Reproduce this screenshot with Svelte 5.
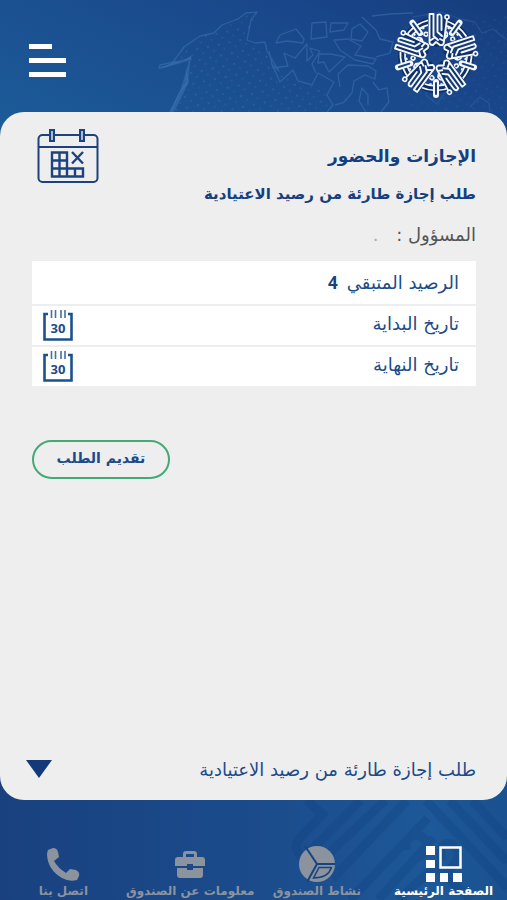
<script>
  const turns = [0, 72, 144, 216, 288];
  const dates = [
    { id: 'start', label: 'تاريخ البداية' },
    { id: 'end', label: 'تاريخ النهاية' }
  ];
  let open = $state(false);
</script>

<div class="app" dir="rtl" lang="ar">
  <header>
    <svg class="map" viewBox="0 0 357 112" aria-hidden="true">
      <defs>
        <pattern id="dots" width="11" height="11" patternUnits="userSpaceOnUse" patternTransform="rotate(-12)">
          <circle cx="3" cy="3" r="1" fill="#4a80bb" opacity=".45" />
          <circle cx="8" cy="8" r="1" fill="#4a80bb" opacity=".3" />
        </pattern>
      </defs>
      <path d="M22 112L41 63L27 61Q40 40 65 31L88 18L107 12L98 40L117 51L129 75L180 90V112Z" fill="url(#dots)" opacity=".8" />
      <path d="M250 20L357 14V112H260Z" fill="url(#dots)" opacity=".4" />
      <g fill="none" stroke="#4177b5" stroke-width="1.3" opacity=".5" stroke-linejoin="round">
        <path d="M21 111L30 92L38 82L36 72L41 58L27 62L17 66L9 68L10 65L23 62L34 47L50 36L64 33L72 25L88 19L96 13L107 12L101 20L97 40L105 43L115 42L117 51L129 71L122 64L127 75L130 82L143 70L148 81L162 85L168 73L184 82L177 95L183 105L177 112" />
        <path d="M126 43L130 35L146 29L154 39L153 43L137 41ZM119 51L123 68L138 66L134 53L145 58L157 44L157 61L163 55L160 48L170 51L162 64L166 73M162 23L176 22L177 37L161 39ZM181 23L198 23L194 30L180 32ZM202 29L210 24L218 32L212 41L201 39ZM184 40L198 39L211 46L205 55L226 59L223 64L205 60L190 50ZM222 16L240 14L263 13M212 17L226 30L230 39L243 42L240 53L226 57M181 54L195 57L179 72L174 62L168 63L169 54ZM190 87L188 74L198 65L218 66L226 71L225 79L215 75L204 81L202 93L193 103L185 105M216 112L209 101L212 88L218 95L218 105M223 82L229 90L237 88L239 102L231 112" />
        <path d="M263 17L292 12L310 19L325 22L332 33L343 29L357 40M260 82L274 77L277 96L287 104L296 91M320 107L330 97L339 103L340 112" opacity=".6" />
      </g>
      <path d="M24 112L38 84L40 63L35 75L30 91L19 112ZM9 69L25 61L33 61L42 55L40 60L28 64Z" fill="#3c73b2" opacity=".55" />
    </svg>

    <svg class="emblem" viewBox="-44 -44 88 88" role="img" aria-label="الشعار">
      <g fill="none" stroke-linecap="round" stroke-linejoin="round">
        {#each turns as turn}
          <g transform="rotate({turn + 36})">
            <path d="M-16-30Q0-39 16-30" stroke="#102f65" stroke-width="7" />
            <path d="M-16-32Q0-39 16-32M-14-28Q0-34 14-28" stroke="#f5f8fc" stroke-width="1.700" />
            <path d="M0-40V-27" stroke="#f5f8fc" stroke-width="6" />
            <path d="M0-39V-28" stroke="#17417d" stroke-width="2" />
            <path d="M-2-22Q-5-27-7-23Q-6-19-2-22Q-2-17-7-16M7-22Q4-27 2-23Q3-19 7-22Q7-17 3-16M-10-26V-22M10-26V-22M-5-29H-6M6-29H5" stroke="#f5f8fc" stroke-width="1.700" />
          </g>
        {/each}
        {#each turns as turn}
          <g transform="rotate({turn})">
            <path d="M-6-40V-14L0-10L6-12L10-37" stroke="#102f65" stroke-width="4" fill="#153b77" />
            <path d="M-6.500-41V-14M-2.500-41V-19L2-15M1.500-40V-23L6-19M5.500-38V-25M11-36L8-14M-6.500-14L-2-17M-6.500-14Q-7-10-3-10L0-13L4-10Q8-9 8-14L4-16M-6.500-41H-2.500M1.500-40Q5-42 5.500-38" stroke="#f5f8fc" stroke-width="1.900" />
            <circle cx="11" cy="-38" r="2" stroke="#f5f8fc" stroke-width="1.600" fill="#17417d" />
          </g>
        {/each}
      </g>
    </svg>

    <button class="menu" aria-label="القائمة"><span></span><span></span><span></span></button>
  </header>

  <main>
    <div class="heading">
      <div>
        <h1>الإجازات والحضور</h1>
        <h2>طلب إجازة طارئة من رصيد الاعتيادية</h2>
      </div>
      <svg class="calendar" viewBox="0 0 62 56" fill="none" stroke="#1c437f" stroke-width="2" aria-hidden="true">
        <rect x="1.5" y="7" width="59" height="47" rx="4" />
        <path d="M2 19H60" />
        <g fill="#a9bbd2"><rect x="13" y="2" width="4" height="11" /><rect x="43" y="2" width="4" height="11" /></g>
        <path d="M15 24.500H30V48.500H15ZM22.500 24.500V48.500M15 32.500H30M15 40.500H46V48.500H30M38 40.500V48.500M35 24L46 35.500M46 24L35 35.500" stroke-width="2.400" />
      </svg>
    </div>

    <p class="manager">المسؤول : <span>.</span></p>

    <form id="request" onsubmit={(event) => event.preventDefault()}>
      <div class="row balance"><span>الرصيد المتبقي</span><strong>4</strong></div>
      {#each dates as date}
        <div class="row">
          <label for={date.id}>{date.label}</label>
          <button type="button" id={date.id} class="pick">
            <svg viewBox="0 0 30 32" fill="none" stroke="#1d508f" aria-hidden="true">
              <path d="M5 4H1.500V29.500H28.500V4H25" stroke-width="2.600" />
              <path d="M8.500 0V8M12.500 0V8M18 0V8M22 0V8" stroke="#47719f" stroke-width="1.600" />
            </svg>
            <span>30</span>
          </button>
        </div>
      {/each}
      <button class="submit">تقديم الطلب</button>
    </form>

    <button class="expand" aria-expanded={open} onclick={() => (open = !open)}>
      <span>طلب إجازة طارئة من رصيد الاعتيادية</span>
      <svg viewBox="0 0 26 18" aria-hidden="true"><path d="M0 0H26L13 18Z" fill="#14397a" /></svg>
    </button>
  </main>

  <nav>
    <svg class="motif" viewBox="0 0 240 100" fill="none" stroke="#0d3e7d" stroke-width="9" opacity=".25" aria-hidden="true">
      <path d="M38 0L54 14L30 39Q23 50 35 58L92 0M48 65L117 0M64 79L139 0M82 100L160 18M110 100L166 38M158 0L192 36L240 88M182 0L240 62M205 0L240 38M138 50Q137 32 152 36Q166 43 153 56L142 62M174 60Q170 40 184 44Q199 54 180 72M130 100L168 66L203 100" />
    </svg>
    <a href="#home" class="active" aria-current="page">
      <svg viewBox="0 0 36 36" aria-hidden="true"><path d="M0 0H9V9H0ZM0 14H9V22H0ZM0 27H9V36H0ZM14 27H22V36H14ZM27 27H36V36H27Z" fill="currentColor" /><path d="M14.500 1.500H34.500V21.500H14.500Z" fill="none" stroke="currentColor" stroke-width="2.500" /></svg>
      <span>الصفحة الرئيسية</span>
    </a>
    <a href="#activity">
      <svg viewBox="0 0 36 36" aria-hidden="true"><circle cx="18" cy="18" r="18" fill="currentColor" /><path d="M6 0L18 18H36M18 18L8 36" fill="none" stroke="#17437f" stroke-width="2" /><path d="M20 21.500H32.500Q29 32 14.500 32Z" fill="none" stroke="#17437f" stroke-width="1.500" /></svg>
      <span>نشاط الصندوق</span>
    </a>
    <a href="#about">
      <svg viewBox="0 0 36 36" aria-hidden="true"><path d="M11 11V8Q11 5 14 5H22Q25 5 25 8V11H30Q33 11 33 14V20H21V18H15V20H3V14Q3 11 6 11ZM14 11H22V8H14ZM5 22H15V24H21V22H31V29Q31 32 28 32H8Q5 32 5 29Z" fill="currentColor" fill-rule="evenodd" /></svg>
      <span>معلومات عن الصندوق</span>
    </a>
    <a href="#contact">
      <svg viewBox="0 0 36 36" aria-hidden="true"><path d="M3 4L8 2Q12 2 13 6L14 11L9 15Q13 22 21 27L25 23L31 24Q35 26 34 30L32 34Q24 36 17 32Q3 24 2 9Q2 6 3 4Z" fill="currentColor" /></svg>
      <span>اتصل بنا</span>
    </a>
  </nav>
</div>

<style>
  :global(body) { margin: 0; }
  * { box-sizing: border-box; }
  .app {
    min-height: 100vh;
    display: flex;
    flex-direction: column;
    font-family: "DejaVu Sans", "Noto Sans", sans-serif;
    color: #1c4b89;
    background: linear-gradient(90deg, #194180 0%, #1b4b8b 50%, #1d5898 85%, #1a5190 100%);
  }
  button { font: inherit; color: inherit; border: 0; padding: 0; background: none; cursor: pointer; }
  header {
    position: relative;
    height: 132px;
    margin-bottom: -20px;
    padding: 11px 27px 36px 29px;
    display: flex;
    justify-content: space-between;
    align-items: flex-start;
    background: linear-gradient(25deg, #1c5b99 0%, #1b5191 35%, #19468a 70%, #163d7d 100%);
  }
  .map { position: absolute; right: 0; top: 0; width: 70.4%; height: 112px; }
  .emblem { position: relative; width: 88px; height: 88px; }
  .menu { display: flex; flex-direction: column; align-items: flex-end; gap: 9px; margin-top: 33px; }
  .menu span { width: 37px; height: 5px; background: #fff; }
  .menu span:first-child { width: 23px; }
  main {
    position: relative;
    flex: 1;
    display: flex;
    flex-direction: column;
    padding: 16px 31px 12px 32px;
    border-radius: 24px;
    background: #eee;
  }
  .heading { display: flex; justify-content: space-between; align-items: flex-start; }
  .heading > div { padding-top: 8px; }
  h1, h2 { margin: 0; font-weight: 700; color: #153f7e; white-space: nowrap; }
  h1 { font-size: 17px; line-height: 40px; }
  h2 { font-size: 15px; line-height: 36px; }
  .calendar { width: 62px; height: 56px; margin-left: 5px; flex: none; }
  .manager { margin: 4px 0 7px; font-size: 18px; line-height: 38px; color: #555; }
  .manager span { color: #aaa; margin-right: 12px; }
  .row {
    display: flex;
    align-items: center;
    justify-content: space-between;
    height: 39px;
    margin-bottom: 2px;
    padding: 0 17px 0 11px;
    background: #fff;
    font-size: 18px;
  }
  .row label { padding-bottom: 4px; }
  .balance { height: 43px; justify-content: flex-start; gap: 9px; }
  .balance strong { font-family: "Noto Sans", sans-serif; font-size: 17px; color: #174382; }
  .pick { position: relative; width: 30px; height: 32px; }
  .pick svg { display: block; width: 30px; height: 32px; }
  .pick span { position: absolute; inset: 8px 0 0; font: 700 13px/20px "Noto Sans", sans-serif; text-align: center; }
  .submit {
    display: block;
    width: 138px;
    height: 39px;
    margin: 54px auto 0 0;
    padding-bottom: 3px;
    border: 2px solid #43aa76;
    border-radius: 20px;
    font-size: 14px;
    font-weight: 700;
  }
  .expand {
    display: flex;
    justify-content: space-between;
    align-items: center;
    width: 100%;
    height: 38px;
    margin-top: auto;
    font-size: 18px;
  }
  .expand svg { width: 26px; height: 18px; margin-left: -6px; }
  nav {
    position: relative;
    height: 100px;
    padding-top: 46px;
    display: flex;
  }
  .motif { position: absolute; right: 0; top: 0; width: 47%; height: 100px; }
  nav a {
    position: relative;
    flex: 1 1 0;
    min-width: 0;
    display: flex;
    flex-direction: column;
    align-items: center;
    color: #8b939f;
    text-decoration: none;
    font-size: 12px;
    font-weight: 700;
    line-height: 18px;
    white-space: nowrap;
  }
  nav a svg { width: 36px; height: 36px; }
  nav .active { color: #fff; }
</style>
